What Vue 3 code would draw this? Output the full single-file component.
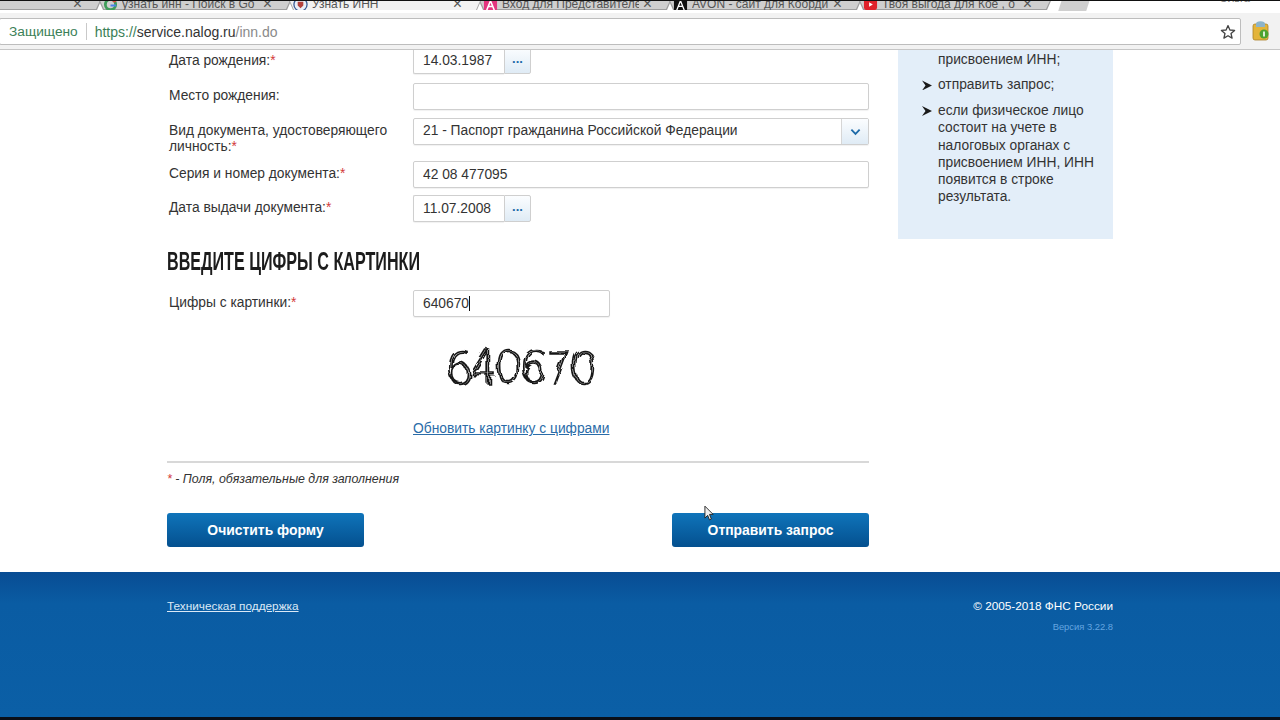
<template>
  <div class="page">
    <header class="browser">
      <div class="tabs">
        <div v-for="tab in tabs" :key="tab.title" class="tab" :class="{ 'tab--active': tab.active }">
          <svg v-if="tab.icon" class="tab__icon" viewBox="0 0 16 16" width="15" height="15">
            <template v-if="tab.icon === 'google'">
              <circle cx="8" cy="8" r="5.5" fill="none" stroke="#3f9d5a" stroke-width="3" />
              <path d="M8 2.5a5.5 5.5 0 0 1 5 3" fill="none" stroke="#e0483a" stroke-width="3" />
              <path d="M8 8h6v2H8z" fill="#4a82e8" />
            </template>
            <template v-else-if="tab.icon === 'nalog'">
              <circle cx="8" cy="8" r="7" fill="#e9eef6" stroke="#3a5c96" stroke-width="1.4" />
              <path d="M5 5h6v4l-3 3-3-3z" fill="#b3413c" />
            </template>
            <template v-else-if="tab.icon === 'pink'">
              <rect x="1" y="1" width="14" height="14" fill="#e4357f" />
              <path d="M4 14 8 4l4 10M6 10h4" fill="none" stroke="#fff" stroke-width="1.6" />
            </template>
            <template v-else-if="tab.icon === 'avon'">
              <rect x="1" y="1" width="14" height="14" fill="#111" />
              <path d="M4 14 8 4l4 10M6 10h4" fill="none" stroke="#fff" stroke-width="1.4" />
            </template>
            <template v-else>
              <rect x="1" y="2" width="14" height="12" rx="3" fill="#e0222b" />
              <path d="M6.5 5.5v5l4-2.5z" fill="#fff" />
            </template>
          </svg>
          <span class="tab__title">{{ tab.title }}</span>
          <span class="tab__close">×</span>
        </div>
        <div class="tab-new"></div>
        <div class="profile">Ольга</div>
      </div>
      <div class="toolbar">
        <div class="omnibox">
          <span class="secure">Защищено</span>
          <span class="omnibox__sep"></span>
          <span class="url"><span class="url__https">https://</span><span class="url__host">service.nalog.ru</span><span class="url__path">/inn.do</span></span>
          <svg class="star" viewBox="0 0 16 16" width="16" height="16">
            <path d="M8 1.6 9.9 6l4.7.4-3.6 3.1 1.1 4.6L8 11.7l-4.1 2.4L5 9.5 1.4 6.4 6.1 6z" fill="none" stroke="#444" stroke-width="1.3" stroke-linejoin="round" />
          </svg>
        </div>
        <svg class="ext" viewBox="0 0 18 20" width="18" height="20">
          <rect x="1" y="3" width="15" height="16" rx="2" fill="#e3b43a" stroke="#a9822a" stroke-width=".8" />
          <path d="M4 3a4 2.5 0 0 1 9 0v3H4z" fill="#8db4c9" />
          <circle cx="12" cy="13" r="4.5" fill="#4da32f" />
          <rect x="11.2" y="10.5" width="1.6" height="5" fill="#fff" />
        </svg>
      </div>
    </header>

    <main class="content">
      <form class="form" @submit.prevent>
        <div class="row row--first">
          <label class="row__label">Дата рождения:<span class="req">*</span></label>
          <div class="date">
            <input class="input" :value="form.birthDate" />
            <button type="button" class="picker">...</button>
          </div>
        </div>
        <div class="row row--second">
          <label class="row__label">Место рождения:</label>
          <input class="input" :value="form.birthPlace" />
        </div>
        <div class="row row--select">
          <label class="row__label">Вид документа, удостоверяющего личность:<span class="req">*</span></label>
          <div class="select">
            <span class="select__value">{{ form.docType }}</span>
            <span class="select__arrow">
              <svg viewBox="0 0 12 8" width="11" height="8">
                <path d="M1.5 1.5 6 6l4.5-4.5" fill="none" stroke="#1d6aa8" stroke-width="2" />
              </svg>
            </span>
          </div>
        </div>
        <div class="row">
          <label class="row__label">Серия и номер документа:<span class="req">*</span></label>
          <input class="input" :value="form.docNumber" />
        </div>
        <div class="row">
          <label class="row__label">Дата выдачи документа:<span class="req">*</span></label>
          <div class="date">
            <input class="input" :value="form.issueDate" />
            <button type="button" class="picker">...</button>
          </div>
        </div>

        <h2 class="heading"><span class="heading__text">ВВЕДИТЕ ЦИФРЫ С КАРТИНКИ</span></h2>

        <div class="row row--captcha">
          <label class="row__label">Цифры с картинки:<span class="req">*</span></label>
          <div class="captcha">
            <div class="input captcha__input">{{ form.captcha }}<span class="caret"></span></div>
            <div class="captcha__image">
              <svg class="defs" width="0" height="0">
                <filter id="captcha-rough" x="-10%" y="-10%" width="120%" height="120%">
                  <feTurbulence type="fractalNoise" baseFrequency="0.06" numOctaves="2" seed="4" />
                  <feDisplacementMap in="SourceGraphic" scale="9" />
                </filter>
              </svg>
              <span class="captcha__digits">640670</span>
            </div>
            <a class="captcha__link" href="#">Обновить картинку с цифрами</a>
          </div>
        </div>

        <hr class="divider" />
        <p class="note"><span class="req">*</span> - Поля, обязательные для заполнения</p>

        <div class="actions">
          <button type="button" class="btn">Очистить форму</button>
          <button type="submit" class="btn">Отправить запрос</button>
        </div>
      </form>

      <aside class="hint">
        <ul class="hint__list">
          <li class="hint__cont">присвоением ИНН;</li>
          <li v-for="item in hints" :key="item">{{ item }}</li>
        </ul>
      </aside>
    </main>

    <footer class="footer">
      <div class="footer__inner">
        <a class="footer__link" href="#">Техническая поддержка</a>
        <div class="footer__right">
          <div>© 2005-2018 ФНС России</div>
          <div class="footer__version">Версия 3.22.8</div>
        </div>
      </div>
    </footer>

    <svg class="cursor" viewBox="0 0 12 18" width="11" height="17">
      <path d="M1 1v13l3-3 2 5 2-1-2-5h4z" fill="#eee" stroke="#222" stroke-width="1" />
    </svg>
  </div>
</template>

<script setup>
import { reactive } from 'vue'

const tabs = [
  { title: '40) - myavon', icon: '' },
  { title: 'узнать инн - Поиск в Go', icon: 'google' },
  { title: 'Узнать ИНН', icon: 'nalog', active: true },
  { title: 'Вход для Представителе', icon: 'pink' },
  { title: 'AVON - сайт для Коорди', icon: 'avon' },
  { title: 'Твоя выгода для Кое , о', icon: 'yt' }
]

const form = reactive({
  birthDate: '14.03.1987',
  birthPlace: '',
  docType: '21 - Паспорт гражданина Российской Федерации',
  docNumber: '42 08 477095',
  issueDate: '11.07.2008',
  captcha: '640670'
})

const hints = [
  'отправить запрос;',
  'если физическое лицо состоит на учете в налоговых органах с присвоением ИНН, ИНН появится в строке результата.'
]
</script>

<style>
html,
body {
  margin: 0;
  background: #fff;
  overflow: hidden;
}
</style>

<style scoped>
.page {
  position: relative;
  width: 1280px;
  height: 720px;
  overflow: hidden;
  font-family: "Liberation Sans", Arial, sans-serif;
  font-size: 13.8px;
  color: #333;
  background: #fff;
}

.browser {
  position: relative;
  z-index: 2;
  height: 50px;
}

.tabs {
  display: flex;
  height: 13px;
  margin-left: -94px;
  width: 1374px;
  background: #fff;
  border-top: 1px solid #111;
  box-sizing: border-box;
  overflow: hidden;
}

.tab {
  position: relative;
  flex: 0 0 198px;
  min-width: 0;
  margin-right: -8px;
  padding: 4px 18px 0 7px;
  box-sizing: border-box;
  display: flex;
  align-items: center;
  gap: 4px;
  height: 16px;
  margin-top: -7px;
  font-size: 12px;
  color: #555;
  background: #9e9e9e;
  clip-path: polygon(0 0, 100% 0, calc(100% - 7px) 100%, 7px 100%);
}

.tab::before {
  content: "";
  position: absolute;
  inset: 0 1px 1px;
  background: #cfcfcf;
  clip-path: polygon(0 0, 100% 0, calc(100% - 7px) 100%, 7px 100%);
}

.tab--active {
  z-index: 1;
  background: #a6a6a6;
}

.tab--active::before {
  background: #f2f2f2;
  bottom: 0;
}

.tab > * {
  position: relative;
}

.tab__icon {
  flex: none;
}

.tab__title {
  flex: 1;
  white-space: nowrap;
  overflow: hidden;
  min-width: 0;
}

.tab__close {
  flex: none;
  font-size: 16px;
  line-height: 12px;
  color: #555;
  margin-right: 4px;
}

.tab-new {
  flex: 0 0 28px;
  height: 13px;
  margin: -2px 0 0 14px;
  background: #cfcfcf;
  transform: skewX(-18deg) translateY(-1px);
}

.profile {
  margin-left: auto;
  margin-right: 30px;
  margin-top: -9px;
  font-size: 11px;
  color: #777;
}

.toolbar {
  display: flex;
  align-items: flex-start;
  height: 37px;
  box-sizing: border-box;
  padding: 5px 0 0;
  background: #f2f2f2;
  border-bottom: 1px solid #c6c6c6;
}

.omnibox {
  flex: 0 0 1242px;
  height: 27px;
  box-sizing: border-box;
  margin-left: -1px;
  padding-left: 9px;
  display: flex;
  align-items: center;
  background: #fff;
  border: 1px solid #bdbdbd;
  border-radius: 2px;
  font-size: 13.7px;
}

.secure {
  color: #3b7f57;
}

.omnibox__sep {
  width: 1px;
  height: 17px;
  margin: 0 8px;
  background: #c9c9c9;
}

.url {
  font-size: 14px;
}

.url__https {
  color: #3b7f57;
}

.url__host {
  color: #333;
}

.url__path {
  color: #8a8a8a;
}

.star {
  margin-left: auto;
  margin-right: 4px;
}

.ext {
  margin: 3px 0 0 11px;
}

.content {
  display: flex;
  gap: 29px;
  width: 946px;
  margin: -3px 0 0 167px;
  height: 525px;
}

.form {
  flex: 0 0 702px;
}

.row {
  display: grid;
  grid-template-columns: 244px 1fr;
  padding-left: 2px;
  margin-bottom: 7px;
}

.row--first {
  margin-bottom: 9px;
}

.row--first .row__label {
  padding-top: 6px;
}

.row--second {
  margin-bottom: 8px;
}

.row--select {
  margin-bottom: 5.5px;
}

.row__label {
  padding: 4.5px 16px 0 0;
  line-height: 16.5px;
  color: #333;
}

.req {
  color: #d33a3a;
}

.input {
  display: block;
  width: 100%;
  height: 27px;
  box-sizing: border-box;
  padding: 0 9px;
  border: 1px solid #cfcfcf;
  border-radius: 2px;
  background: #fff;
  font: 13.8px/25px "Liberation Sans", Arial, sans-serif;
  color: #333;
  outline: none;
  box-shadow: 0 1px 1px rgba(0, 0, 0, 0.06);
}

.date {
  display: flex;
  width: 118px;
}

.date .input {
  flex: 0 0 91px;
  border-right: 0;
  border-radius: 2px 0 0 2px;
}

.picker {
  flex: 1;
  padding: 0 0 4px;
  border: 1px solid #cfcfcf;
  border-radius: 0 2px 2px 0;
  background: linear-gradient(#fbfdff, #dfebf5);
  color: #1d6aa8;
  font: bold 13px/1 "Liberation Sans", sans-serif;
}

.select {
  display: flex;
  height: 27px;
  box-sizing: border-box;
  border: 1px solid #cfcfcf;
  border-radius: 2px;
  line-height: 23px;
  box-shadow: 0 1px 1px rgba(0, 0, 0, 0.06);
}

.select__value {
  flex: 1;
  padding-left: 9px;
}

.select__arrow {
  flex: 0 0 26px;
  display: flex;
  align-items: center;
  justify-content: center;
  border-left: 1px solid #d6d6d6;
  background: linear-gradient(#fbfdff, #dfebf5);
}

.heading {
  margin: 25px 0 14px;
  font-size: 25px;
  line-height: 29px;
  font-weight: 700;
  color: #1c1c1c;
  white-space: nowrap;
}

.heading__text {
  display: inline-block;
  transform: scaleX(0.645);
  transform-origin: left center;
}

.row--captcha {
  margin-bottom: 0;
}

.captcha__input {
  width: 197px;
}

.caret {
  display: inline-block;
  width: 1px;
  height: 15px;
  vertical-align: -3px;
  background: #111;
}

.captcha__image {
  width: 197px;
  height: 82px;
  display: flex;
  align-items: center;
  justify-content: center;
  margin-top: 10px;
}

.defs {
  position: absolute;
}

.captcha__digits {
  margin-left: 16px;
  font-family: "DejaVu Sans", sans-serif;
  font-size: 44px;
  font-weight: 200;
  line-height: 50px;
  letter-spacing: -3px;
  color: #fff;
  -webkit-text-stroke: 1.7px #151515;
  filter: url(#captcha-rough);
}

.captcha__link {
  display: block;
  margin-top: 11px;
  color: #2a6ca8;
  line-height: 18px;
}

.divider {
  height: 2px;
  margin: 23px 0 0;
  border: 0;
  background: #d8d8d8;
}

.note {
  margin: 9px 0 0;
  font-size: 12.4px;
  line-height: 15px;
  font-style: italic;
  color: #333;
}

.actions {
  display: flex;
  justify-content: space-between;
  margin-top: 26px;
}

.btn {
  width: 197px;
  height: 34px;
  padding: 0;
  border: 0;
  border-radius: 3px;
  background: linear-gradient(#0f74ba, #04508f);
  color: #fff;
  font: bold 13.9px "Liberation Sans", Arial, sans-serif;
}

.hint {
  flex: 0 0 215px;
  align-self: flex-start;
  box-sizing: border-box;
  margin-top: 3px;
  height: 189px;
  background: #e3eef9;
  padding: 1px 15px 0 40px;
  line-height: 17.3px;
}

.hint__list {
  margin: 0;
  padding: 0;
  list-style: none;
}

.hint__list li {
  position: relative;
  margin-bottom: 8.2px;
}

.hint__list li:not(.hint__cont)::before {
  content: "";
  position: absolute;
  left: -16px;
  top: 4px;
  width: 10px;
  height: 10px;
  background: #1a1a1a;
  clip-path: polygon(0 0, 100% 50%, 0 100%, 35% 50%);
}

.footer {
  height: 148px;
  box-sizing: border-box;
  border-bottom: 3px solid #0a0f18;
  background: linear-gradient(180deg, #084c93 0, #0a5ca3 22%, #0b5fa6 100%);
  color: #fff;
}

.footer__inner {
  display: flex;
  justify-content: space-between;
  width: 946px;
  margin-left: 167px;
  padding-top: 26px;
  font-size: 11.8px;
  line-height: 16px;
}

.footer__link {
  color: #dbe9f6;
}

.footer__right {
  text-align: right;
}

.footer__version {
  margin-top: 5px;
  font-size: 9.4px;
  color: #64a5e0;
}

.cursor {
  position: absolute;
  left: 704px;
  top: 505px;
}
</style>
